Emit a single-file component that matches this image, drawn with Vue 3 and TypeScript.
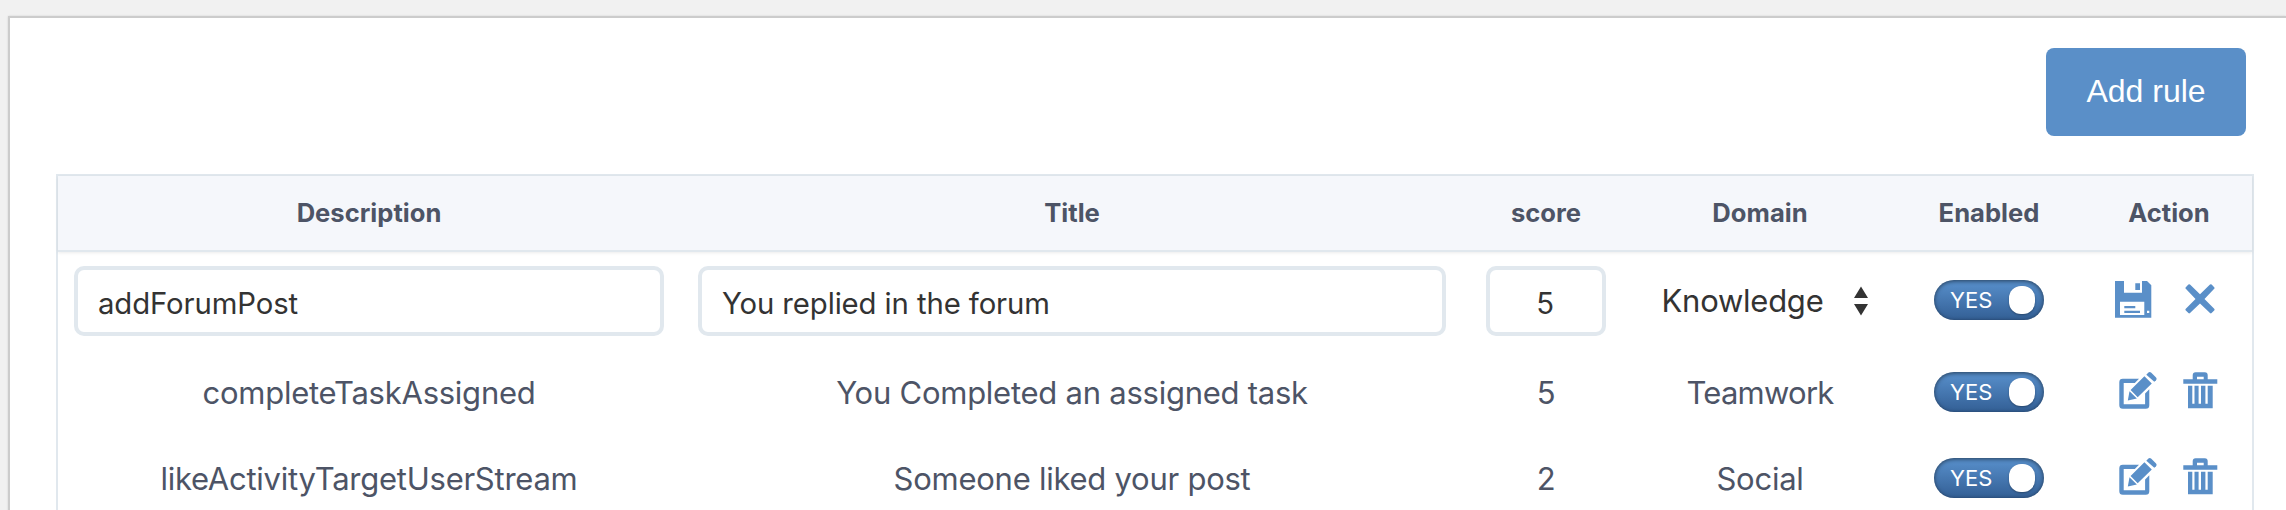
<script setup lang="ts">
import { ref } from 'vue'

interface Rule {
  id: number
  description: string
  title: string
  score: string
  domain: string
  editing: boolean
}

const columns = ['Description', 'Title', 'score', 'Domain', 'Enabled', 'Action']

const rules = ref<Rule[]>([
  { id: 1, description: 'addForumPost', title: 'You replied in the forum', score: '5', domain: 'Knowledge', editing: true },
  { id: 2, description: 'completeTaskAssigned', title: 'You Completed an assigned task', score: '5', domain: 'Teamwork', editing: false },
  { id: 3, description: 'likeActivityTargetUserStream', title: 'Someone liked your post', score: '2', domain: 'Social', editing: false },
])
</script>

<template>
  <div class="page">
    <main class="panel">
      <div class="toolbar">
        <button class="add" type="button">Add rule</button>
      </div>
      <section class="table">
        <header class="row head">
          <div v-for="c in columns" :key="c" class="cell">{{ c }}</div>
        </header>
        <div v-for="r in rules" :key="r.id" class="row" :class="{ editing: r.editing }">
          <template v-if="r.editing">
            <div class="cell"><input v-model="r.description" class="field" type="text" /></div>
            <div class="cell"><input v-model="r.title" class="field" type="text" /></div>
            <div class="cell"><input v-model="r.score" class="field score" type="text" /></div>
            <div class="cell select">
              <span>{{ r.domain }}</span>
              <svg class="arrows" width="14" height="30" viewBox="0 0 14 30">
                <path d="M7 0.5 14 12H0zM0 18h14L7 29.5z" />
              </svg>
            </div>
          </template>
          <template v-else>
            <div class="cell">{{ r.description }}</div>
            <div class="cell">{{ r.title }}</div>
            <div class="cell">{{ r.score }}</div>
            <div class="cell" :class="r.domain.toLowerCase()">{{ r.domain }}</div>
          </template>
          <div class="cell">
            <div class="toggle"><span>YES</span><i class="knob"></i></div>
          </div>
          <div v-if="r.editing" class="cell actions edit-mode">
            <svg width="37" height="37" viewBox="0 0 37 37">
              <path
                fill-rule="evenodd"
                d="M0 0h9v11.7h18V0h5l4.3 4.3v32.4H0zM5 20.7V34h24.3V20.7zM32 29.7v2.3h2.3v-2.3z"
              />
              <path d="M20.3 2.3H25V9h-4.7zM9.3 25h11v2.3h-11zM9.3 29.7H25V32H9.3z" />
            </svg>
            <svg width="30" height="30" viewBox="0 0 30 30">
              <path
                d="M5 .6 15 10.3 25 .6q.8-.7 1.6 0l2.6 2.6q.8.8 0 1.6L19.5 15l9.7 9.8q.8.8 0 1.6l-2.6 2.7q-.8.8-1.6 0L15 19.4 5 29.1q-.8.8-1.6 0L.8 26.4q-.8-.8 0-1.6L10.5 15 .8 4.8q-.8-.8 0-1.6L3.4.6q.8-.7 1.6 0z"
              />
            </svg>
          </div>
          <div v-else class="cell actions">
            <svg width="38" height="37" viewBox="0 0 38 37">
              <path
                d="M20 6.8 15.8 11H4.7v21.3h21.4V21.4l4.2-4.2v16q0 3.5-3.5 3.5H3.8q-3.5 0-3.5-3.5v-23q0-3.4 3.5-3.4z"
              />
              <path d="M25.4 4.3 32.8 11.6 18.7 25.2 11.6 18.1zM10.5 19.3 17.9 26.5 8.8 28.4z" />
              <path d="M27.3 2.7 29.2.8q1.5-1.4 3.1 0l4.5 4.4q1.5 1.6.2 3L35.3 9.8z" />
            </svg>
            <svg width="35" height="37" viewBox="0 0 35 37">
              <path
                fill-rule="evenodd"
                d="M9.7 7.3V3.2Q9.7.3 12.6.3h9.2q2.9 0 2.9 2.9v4.1h9.6v4.4H.3V7.3zM14 4.8v2.5h6.7V4.8z"
              />
              <path d="M5 13.7h4.3v18h2.2v-18h4.1v18H18v-18h4.4v18h2.3v-18h5v22.6H5z" />
            </svg>
          </div>
        </div>
      </section>
    </main>
  </div>
</template>

<style>
body {
  margin: 0;
  overflow: hidden;
}
</style>

<style scoped>
* {
  box-sizing: border-box;
}
.page {
  height: 510px;
  padding: 16px 0 0 8px;
  overflow: hidden;
  background: #f1f1f1;
  font-family: Inter, 'Liberation Sans', sans-serif;
  color: #4d5466;
}
.panel {
  height: 520px;
  padding: 30px 32px 0 46px;
  border-top: 2px solid #ccc;
  border-left: 2px solid #ccc;
  background: #fff;
  box-shadow: 0 0 2px rgba(0, 0, 0, 0.12);
}
.toolbar {
  display: flex;
  justify-content: flex-end;
  padding-right: 8px;
  margin-bottom: 38px;
}
.add {
  width: 200px;
  height: 88px;
  padding: 0 0 2px;
  border: 0;
  border-radius: 8px;
  background: #5a8fc8;
  color: #fff;
  font: 32px 'Liberation Sans', Arial, sans-serif;
}
.table {
  height: 400px;
  border: 2px solid #e1e8ee;
  border-bottom: 0;
}
.row {
  display: grid;
  grid-template-columns: 622px 784px 164px 264px 194px 1fr;
  height: 86px;
  font-size: 31px;
  letter-spacing: -0.25px;
}
.head {
  height: 76px;
  padding-bottom: 1px;
  border-bottom: 2px solid #e1e8ee;
  background: #f5f7fb;
  box-shadow: 0 1px 3px rgba(0, 0, 0, 0.08);
  font-size: 25.6px;
  font-weight: 700;
  letter-spacing: 0;
}
.editing {
  height: 97px;
  color: #333;
}
.cell {
  display: flex;
  align-items: center;
  justify-content: center;
  white-space: nowrap;
}
.editing .cell:nth-child(-n + 3) {
  align-items: flex-start;
  padding: 14px 18px 0;
}
.editing .cell:first-child {
  padding: 14px 16px 0;
}
.editing .cell:nth-child(3) {
  padding: 14px 22px 0;
}
.field {
  width: 100%;
  height: 70px;
  padding: 5px 20px 0;
  border: 4px solid #e1e8ee;
  border-radius: 10px;
  outline: 0;
  background: #fff;
  color: #333;
  font: 29.3px Inter, sans-serif;
  letter-spacing: -0.1px;
}
.editing .score {
  padding-left: 0;
  padding-right: 2px;
  text-align: center;
}
.select {
  gap: 31px;
  padding-left: 10px;
}
.arrows {
  fill: #333;
}
.teamwork {
  letter-spacing: -0.75px;
}
.toggle {
  display: flex;
  align-items: center;
  justify-content: space-between;
  width: 110px;
  height: 40px;
  padding: 0 9px 0 16px;
  border-radius: 20px;
  background: linear-gradient(#5389c4 15%, #335f95);
  box-shadow: inset 0 1px 4px rgba(0, 0, 0, 0.55);
  color: #fff;
  font-size: 22px;
  letter-spacing: 0;
}
.editing .toggle {
  margin-top: -1px;
}
.knob {
  width: 26px;
  height: 28px;
  border-radius: 12px;
  background: #fff;
  box-shadow: 0 1px 2px rgba(0, 0, 0, 0.3);
}
.actions {
  justify-content: flex-start;
  gap: 26px;
  padding-left: 33px;
  fill: #5a8fc8;
}
.actions svg {
  flex: none;
  margin-top: -3px;
}
.edit-mode {
  gap: 33px;
  padding-left: 29px;
}
</style>
